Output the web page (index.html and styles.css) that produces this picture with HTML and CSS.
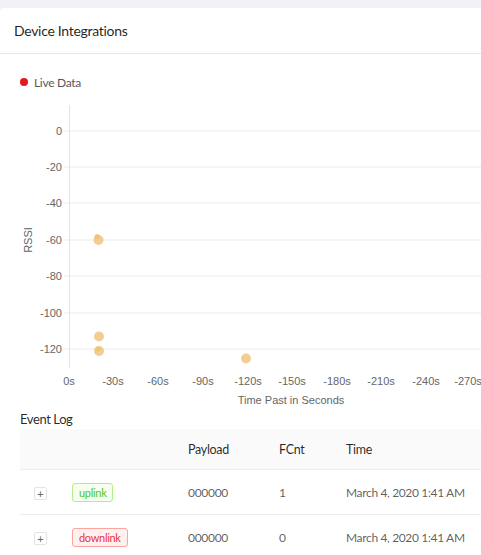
FILE: index.html
```html
<!DOCTYPE html>
<html>
<head>
<meta charset="utf-8">
<link rel="stylesheet" href="styles.css">
</head>
<body>
<div class="card">
  <div class="card-head">Device Integrations</div>
  <div class="card-body">
    <div class="live"><span class="dot"></span>Live Data</div>
    <svg class="chart" width="481" height="310" viewBox="0 0 481 310">
      <g class="grid">
        <line x1="64" y1="31" x2="481" y2="31"/>
        <line x1="64" y1="67" x2="481" y2="67"/>
        <line x1="64" y1="103" x2="481" y2="103"/>
        <line x1="64" y1="140" x2="481" y2="140"/>
        <line x1="64" y1="176" x2="481" y2="176"/>
        <line x1="64" y1="213" x2="481" y2="213"/>
        <line x1="64" y1="249" x2="481" y2="249"/>
      </g>
      <line class="axis" x1="69.5" y1="5" x2="69.5" y2="268"/>
      <g class="ylab">
        <text x="62" y="35">0</text>
        <text x="62" y="71">-20</text>
        <text x="62" y="107">-40</text>
        <text x="62" y="144">-60</text>
        <text x="62" y="180">-80</text>
        <text x="62" y="217">-100</text>
        <text x="62" y="253">-120</text>
      </g>
      <g class="xlab">
        <text x="69" y="285">0s</text>
        <text x="113" y="285">-30s</text>
        <text x="158" y="285">-60s</text>
        <text x="203" y="285">-90s</text>
        <text x="248" y="285">-120s</text>
        <text x="292" y="285">-150s</text>
        <text x="337" y="285">-180s</text>
        <text x="381" y="285">-210s</text>
        <text x="426" y="285">-240s</text>
        <text x="468" y="285">-270s</text>
      </g>
      <text class="xtitle" x="291" y="304">Time Past in Seconds</text>
      <text class="ytitle" transform="translate(32 140) rotate(-90)">RSSI</text>
      <g class="pts">
        <circle cx="97" cy="136.5" r="2.5"/>
        <circle cx="98.5" cy="140" r="5"/>
        <circle cx="99" cy="236.5" r="5"/>
        <circle cx="98" cy="249" r="2.5"/>
        <circle cx="99" cy="251" r="5"/>
        <circle cx="246" cy="258.5" r="5"/>
      </g>
    </svg>
    <div class="log-title">Event Log</div>
    <table class="log">
      <colgroup>
        <col class="c1"><col class="c2"><col class="c3"><col class="c4"><col>
      </colgroup>
      <thead>
        <tr><th></th><th></th><th>Payload</th><th>FCnt</th><th>Time</th></tr>
      </thead>
      <tbody>
        <tr>
          <td class="exp"><span class="plus">+</span></td>
          <td><span class="tag up">uplink</span></td>
          <td>000000</td><td>1</td><td class="time">March 4, 2020 1:41 AM</td>
        </tr>
        <tr>
          <td class="exp"><span class="plus">+</span></td>
          <td><span class="tag down">downlink</span></td>
          <td>000000</td><td>0</td><td class="time">March 4, 2020 1:41 AM</td>
        </tr>
      </tbody>
    </table>
  </div>
</div>
</body>
</html>
```
FILE: styles.css
```css
html, body {
  margin: 0;
  padding: 0;
}
body {
  background: #f0f2f5;
  font-family: Lato, "Open Sans", sans-serif;
  overflow: hidden;
  height: 555px;
}
.card {
  margin-top: 8px;
  background: #fff;
  border-radius: 4px 0 0 0;
  width: 490px;
  height: 600px;
}
.card-head {
  height: 45px;
  line-height: 46px;
  padding-left: 14px;
  font-size: 14px;
  letter-spacing: -0.3px;
  color: rgba(0,0,0,0.88);
  border-bottom: 1px solid #e8e8e8;
}
.card-body {
  padding: 0;
}
.live {
  display: flex;
  align-items: center;
  height: 16px;
  margin-top: 20px;
  padding-left: 20px;
  font-size: 12px;
  letter-spacing: -0.3px;
  color: #595959;
}
.dot {
  width: 8px;
  height: 8px;
  border-radius: 50%;
  background: #e5181e;
  margin-right: 6px;
}
.chart {
  display: block;
  margin-top: 10px;
}
.grid line {
  stroke: #ebebeb;
  stroke-width: 1;
}
.axis {
  stroke: #e3e3e3;
  stroke-width: 1;
}
.ylab text, .xlab text, .xtitle, .ytitle {
  font-family: "Liberation Sans", Arial, sans-serif;
  font-size: 11px;
  fill: #666;
}
.ylab text { text-anchor: end; }
.xlab text, .xtitle, .ytitle { text-anchor: middle; }
.pts circle {
  fill: rgba(239, 190, 110, 0.75);
}
.log-title {
  margin-left: 20px;
  height: 18px;
  line-height: 18px;
  font-size: 13px;
  letter-spacing: -0.4px;
  color: rgba(0,0,0,0.85);
}
.log {
  margin-left: 20px;
  margin-top: 1px;
  width: 470px;
  border-collapse: collapse;
  table-layout: fixed;
  font-size: 12px;
  letter-spacing: -0.3px;
}
.c1 { width: 52px; }
.c2 { width: 116px; }
.c3 { width: 91px; }
.c4 { width: 67px; }
.log th {
  background: #fafafa;
  height: 40px;
  text-align: left;
  font-weight: normal;
  font-size: 12.5px;
  color: rgba(0,0,0,0.85);
  padding: 0;
  border-bottom: 1px solid #ededed;
}
.log td {
  height: 44px;
  padding: 0;
  color: rgba(0,0,0,0.65);
  border-bottom: 1px solid #ededed;
  white-space: nowrap;
}
.log td.time {
  letter-spacing: -0.35px;
}
.log td.exp {
  padding-left: 14px;
}
.plus {
  display: inline-flex;
  align-items: center;
  justify-content: center;
  width: 11px;
  height: 11px;
  border: 1px solid #e3e3e3;
  border-radius: 2px;
  font-size: 11px;
  line-height: 1;
  color: #666;
  vertical-align: middle;
  letter-spacing: 0;
}
.tag {
  display: inline-block;
  height: 17px;
  line-height: 17px;
  padding: 0 6px;
  border-radius: 3px;
  font-size: 11px;
  letter-spacing: -0.3px;
  border: 1px solid;
  vertical-align: middle;
}
.tag.up {
  color: #52c41a;
  background: #f6ffed;
  border-color: #b7eb8f;
}
.tag.down {
  color: #e8343f;
  background: #fff1f0;
  border-color: #ffa39e;
}
```
